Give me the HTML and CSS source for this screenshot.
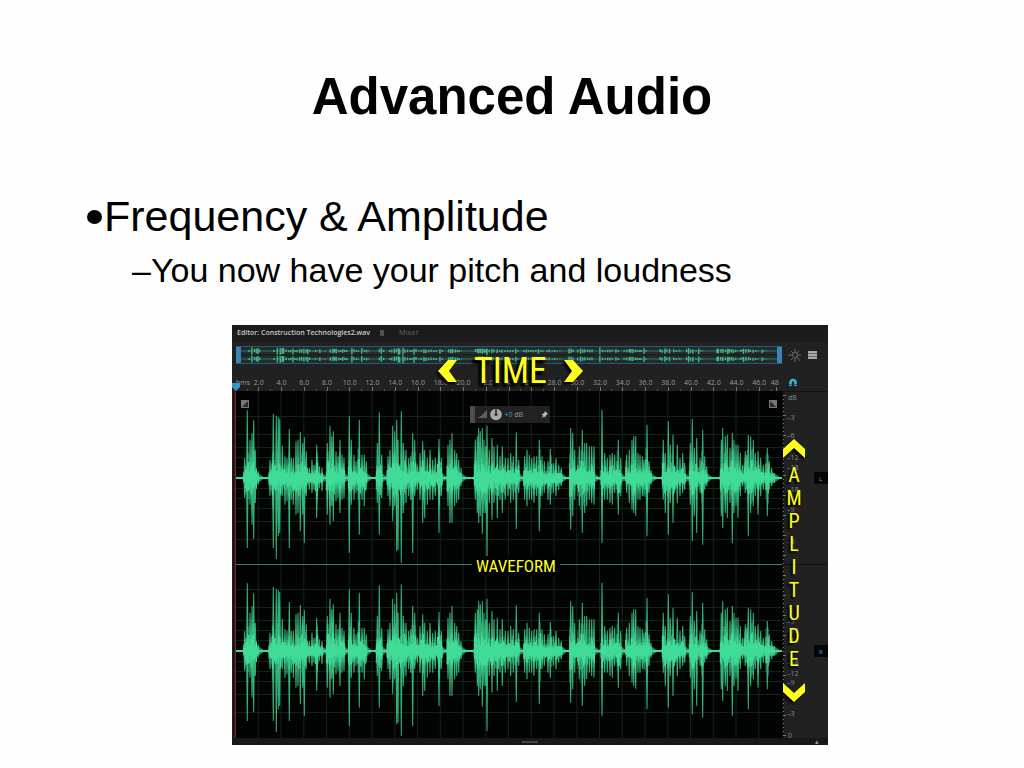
FILE: index.html
```
<!DOCTYPE html>
<html lang="en">
<head>
    <meta charset="UTF-8">
    <meta name="viewport" content="width=device-width, initial-scale=1.0">
    <title>Advanced Audio</title>
    <link rel="stylesheet" href="styles.css">
</head>
<body>
    <main class="slide">
        <h1>Advanced Audio</h1>
        <ul class="points">
            <li>Frequency &amp; Amplitude
                <ul class="sub-points">
                    <li>You now have your pitch and loudness</li>
                </ul>
            </li>
        </ul>

        <figure class="editor">
            <div class="tabs">
                <span class="tab-active">Editor: Construction Technologies2.wav</span>
                <svg class="tab-menu" viewBox="0 0 6 6"><path d="M1 1h4M1 3h4M1 5h4" stroke="#888" stroke-width="1"/></svg>
                <span class="tab">Mixer</span>
            </div>

            <div class="top-row">
                <svg class="overview" viewBox="0 0 548 18" preserveAspectRatio="none">
                    <rect width="548" height="18" fill="#252b2b"/>
                    <path d="M0 .5H548M0 17.5H548" stroke="#245a80"/>
                    <path d="M5 9H543" stroke="#151919"/>
                    <g id="overview-wave" fill="#42b98a"></g>
                    <path d="M0 1h5v16h-5zM543 1h5v16h-5z" fill="#3a84b8"/>
                </svg>
                <svg class="tool-icons" viewBox="0 0 46 18">
                    <g stroke="#6a6a6a" fill="none">
                        <circle cx="13" cy="9" r="2.500"/>
                        <path d="M6 9h4M16 9h3M13 3v3M13 12v4M9 5l2 2M17 5l-2 2M9 14l2-2M15 11l3 4"/>
                    </g>
                    <path d="M26 5h9v8h-9z" fill="#aaa"/>
                    <path d="M26 7.500h9M26 10.500h9" stroke="#666"/>
                </svg>
            </div>

            <div class="ruler-row">
                <div class="ruler" id="ruler"><span class="unit">hms</span></div>
                <svg class="magnet" viewBox="0 0 10 9"><path d="M2.500 8V4.500a2.500 2.500 0 0 1 5 0V8" fill="none" stroke="#35b5d8" stroke-width="2.600"/><path d="M1 6.500h3M6 6.500h3" stroke="#1d2a2e" stroke-width=".6"/></svg>
            </div>

            <div class="stage">
                <svg class="gutter" viewBox="0 0 4 347"><path d="M3.500 0V347" stroke="#8a2020"/></svg>
                <svg class="waves" viewBox="0 0 546 347">
                    <rect width="546" height="347" fill="#020403"/>
                    <g id="grid" stroke="#12241a" stroke-width="1"></g>
                    <path d="M0 173.500H546" stroke="#3f7d61" stroke-width="1"/>
                    <g id="waveforms" fill="#40db96"></g>
                    <g fill="#777">
                        <path d="M5 9h8v8h-8z"/><path d="M6 16l6-6v6z" fill="#2b2b2b"/>
                        <path d="M533 9h8v8h-8z"/><path d="M534 10l6 6h-6z" fill="#2b2b2b"/>
                    </g>
                </svg>
                <svg class="scale" viewBox="0 0 46 347">
                    <rect width="46" height="347" fill="#212121"/>
                    <path d="M0 0V347" stroke="#111" stroke-width="4"/>
                    <path d="M0 .5H46M0 173.500H46" stroke="#111"/>
                    <g id="scale-ticks" stroke="#777" stroke-width="1"></g>
                    <g class="scale-text">
                        <text x="6" y="9">dB</text>
                        <text x="5" y="29">–3</text>
                        <text x="5" y="47">–6</text>
                        <text x="5" y="69">–12</text>
                        <text x="5" y="79">–18</text>
                        <text x="5" y="101">–18</text>
                        <text x="5" y="121">–9</text>
                        <text x="5" y="153">–3</text>
                        <text x="5" y="233">–9</text>
                        <text x="5" y="242">–12</text>
                        <text x="5" y="252">–18</text>
                        <text x="5" y="274">–18</text>
                        <text x="5" y="285">–12</text>
                        <text x="5" y="294">–9</text>
                        <text x="5" y="325">–3</text>
                        <text x="6" y="347">0</text>
                    </g>
                    <path d="M32 81h14v12h-14zM32 254h14v12h-14z" fill="#060606"/>
                    <g class="channel-text">
                        <text x="37" y="90" fill="#999">L</text>
                        <text x="37" y="263" fill="#3f9fe0">R</text>
                    </g>
                </svg>
                <svg class="playhead" viewBox="0 0 8 8"><path d="M0 0h8v4L4 8 0 4z" fill="#3496cf"/></svg>
                <div class="hud">
                    <svg viewBox="0 0 34 17">
                        <path d="M0 0h5v17h-5z" fill="#4b4b4b"/>
                        <path d="M2 3v12" stroke="#6b6b6b" stroke-dasharray="1 1"/>
                        <path d="M7 12h1v-1h2v-1h2V8h2V6h2V4h1v8z" fill="#606060"/>
                        <circle cx="26" cy="8.500" r="5.800" fill="#aaa"/>
                        <path d="M26 3v5" stroke="#222" stroke-width="1.500"/><circle cx="26" cy="8.500" r="1.500" fill="#333"/>
                    </svg>
                    <span><b>+0</b> dB</span>
                    <svg class="pin" viewBox="0 0 12 17"><path d="M0 0V17" stroke="#1a1a1a"/><path d="M7 5l3 3-1 .5-1.500 1.500v1.500L6 10.500 3.500 12.500 5 9.500 3.500 8H5l1.500-1.500z" fill="#bbb"/></svg>
                </div>
                <span class="waveform-note">WAVEFORM</span>
            </div>

            <div class="bottom-bar"><span class="grip"></span><span class="corner">▴</span></div>

            <div class="time-note">
                <svg viewBox="0 0 20 22"><path d="M20 0h-9L1 11l10 11h9L12 11z"/></svg>
                <span>TIME</span>
                <svg viewBox="0 0 20 22"><path d="M0 0h9l10 11L9 22H0l8-11z"/></svg>
            </div>
            <div class="amplitude-note">
                <svg viewBox="0 0 22 20"><path d="M0 20v-9L11 1l11 10v9L11 10z"/></svg>
                <div class="letters"><span>A</span><span>M</span><span>P</span><span>L</span><span>I</span><span>T</span><span>U</span><span>D</span><span>E</span></div>
                <svg viewBox="0 0 22 20"><path d="M0 0v9l11 10L22 9V0L11 10z"/></svg>
            </div>
        </figure>
    </main>
    <script src="wave.js"></script>
</body>
</html>
```
FILE: wave.js
```
// Bursts of the recording: each peak is [position, height above, height below],
// in thirds of a pixel
const bursts = [
    [[26,60,60],[34,203,210],[42,115,80],[48,135,140],[53,173,183],[58,85,75],[66,20,20]],
    [[102,55,55],[112,193,210],[121,187,243],[127,183,175],[131,177,165],[139,97,55],[147,65,80],[153,60,70],[160,147,210],[166,60,65],[172,60,80],[180,110,110],[186,115,105],[193,138,160],[200,105,110],[205,123,195],[211,80,55],[220,30,35],[228,55,45],[234,40,35],[242,100,120],[250,35,30],[258,30,40]],
    [[274,105,110],[282,157,140],[287,125,85],[292,140,130],[300,80,70],[306,65,60],[312,115,105],[318,70,65],[324,60,60]],
    [[340,185,225],[346,115,80],[354,70,65],[360,50,45],[370,175,170],[378,70,65],[385,70,85],[391,50,35]],
    [[424,105,75],[430,197,170],[437,70,60]],
    [[456,65,55],[462,85,85],[470,157,130],[476,140,85],[482,175,220],[486,115,215],[496,200,255],[502,105,105],[510,85,75],[518,60,55],[524,65,65],[530,135,225],[536,115,55],[544,40,35],[552,75,65],[560,110,135],[566,85,120],[574,60,80],[582,85,65],[590,55,65],[598,60,55],[609,117,165],[616,60,55]],
    [[636,100,85],[642,115,135],[648,135,135],[656,85,85],[662,75,75],[668,55,65],[675,30,25]],
    [[718,115,65],[724,125,105],[728,150,135],[733,140,115],[739,150,167],[744,115,105],[749,95,105],[753,157,240],[760,85,75],[768,120,125],[774,95,75],[784,100,120],[792,65,65],[799,95,105],[808,60,65],[816,60,55],[824,75,75],[832,65,65],[841,137,153],[848,55,45]],
    [[866,65,65],[873,85,85],[880,70,65],[887,60,65],[894,65,75],[902,65,55],[910,115,160],[918,65,55],[925,50,45],[936,50,65],[943,87,80],[952,45,45],[960,60,55],[968,40,35],[976,30,25]],
    [[1004,150,155],[1010,135,115],[1016,85,65],[1030,95,85],[1039,145,165],[1046,105,105],[1052,105,85],[1060,95,65],[1067,95,75],[1074,95,80]],
    [[1098,205,195],[1106,75,65],[1114,60,65],[1122,70,75],[1129,75,80],[1136,70,45],[1147,115,110],[1154,60,55]],
    [[1172,70,45],[1180,85,75],[1188,115,95],[1193,125,105],[1199,125,113],[1206,75,65],[1212,70,65],[1219,65,55],[1224,55,55],[1233,160,175],[1239,50,45],[1245,25,20]],
    [[1282,115,65],[1288,75,105],[1297,170,170],[1303,100,75],[1311,130,135],[1324,100,75],[1332,60,55],[1340,75,45],[1346,45,35]],
    [[1363,105,80],[1369,177,190],[1375,90,115],[1382,120,165],[1392,60,45],[1400,145,200],[1406,65,35],[1412,35,25]],
    [[1456,115,115],[1460,150,150],[1468,125,105],[1474,130,120],[1482,90,75],[1489,135,195],[1494,115,105],[1500,100,85],[1506,100,120],[1513,75,55],[1520,40,25]],
    [[1528,80,45],[1532,70,35],[1537,130,175],[1544,125,105],[1552,115,85],[1558,75,55],[1566,80,110],[1574,60,55],[1582,40,35],[1594,90,115],[1600,50,35],[1607,30,25],[1614,15,15]]
];

const n = v => v.toFixed(1);

// Small repeatable wobble so that the body of the wave looks rough
function rough(i) {
    const s = Math.sin(i * 91.7) * 4375.5;
    return s - Math.floor(s);
}

function spike(x, y, up, down, half) {
    return `M${n(x - half)} ${n(y)}L${n(x - 0.5)} ${n(y - up)}h1L${n(x + half)} ${n(y)}L${n(x + 0.5)} ${n(y + down)}h-1Z`;
}

function channel(y) {
    let tall = '';
    let body = `M0 ${y - 1}H546V${y + 1}H0Z`;
    let edges = '';
    bursts.forEach(burst => {
        burst.forEach(([x, up, down]) => {
            tall += spike(x / 3, y, up / 3, down / 3, 1.3);
        });
        const first = burst[0][0] / 3;
        const last = burst[burst.length - 1][0] / 3;
        for (let x = first - 1; x <= last + 1; x += 0.8) {
            // nearest peak sets how thick the body is here
            const near = burst.reduce((a, b) => Math.abs(b[0] / 3 - x) < Math.abs(a[0] / 3 - x) ? b : a);
            const r = rough(x + 3);
            const up = Math.min(near[1] / 3 * 0.5, 19) * (0.3 + 0.7 * r);
            const down = Math.min(near[2] / 3 * 0.5, 19) * (0.3 + 0.7 * rough(x + 40));
            body += `M${n(x - 0.5)} ${n(y - up)}h1V${n(y + down)}h-1Z`;
            if (r > 0.65) {
                edges += `M${n(x - 0.3)} ${n(y - up * 1.6)}h.6V${n(y + down * 1.7)}h-.6Z`;
            }
        }
        edges += `M${n(first - 3)} ${y}L${n(first)} ${y - 5}H${n(last)}L${n(last + 7)} ${y}L${n(last)} ${y + 5}H${n(first)}Z`;
    });
    return `<path d="${tall}" opacity=".8"/><path d="${edges}" opacity=".6"/><path d="${body}"/>`;
}

document.getElementById('waveforms').innerHTML = channel(87) + channel(260);

// Overview strip
let mini = '';
[5, 13].forEach(y => {
    mini += `M5 ${y - 0.3}H543v.6H5Z`;
    bursts.forEach(burst => burst.forEach(([x, up, down]) => {
        mini += `M${n(x / 3 * 0.985 + 4)} ${n(y - up / 60)}h1.4V${n(y + down / 60)}h-1.4Z`;
    }));
});
document.getElementById('overview-wave').innerHTML = `<path d="${mini}"/>`;

// Grid
let lines = '';
for (let i = 1; i < 24; i++) {
    lines += `M${n(i * 22.75 - 0.5)} 0V347`;
}
[87, 260].forEach(y => {
    [11, 21, 31, 44, 62].forEach(d => {
        lines += `M0 ${y - d + 0.5}H546M0 ${y + d - 0.5}H546`;
    });
});
document.getElementById('grid').innerHTML = `<path d="${lines}"/>`;

// Time ruler
const ruler = document.getElementById('ruler');
for (let t = 2; t <= 46; t += 2) {
    const mark = document.createElement('span');
    mark.textContent = t.toFixed(1);
    ruler.appendChild(mark);
}
const end = document.createElement('span');
end.textContent = '48';
ruler.appendChild(end);

let ticks = '';
for (let y = 4; y < 347; y += 4) {
    ticks += `M1 ${y + 0.5}h${y % 20 === 4 ? 3 : 1}`;
}
document.getElementById('scale-ticks').innerHTML = `<path d="${ticks}"/>`;
```
FILE: styles.css
```
:root {
    --panel: #212121;
    --panel-dark: #1b1b1b;
    --label: #999;
    --note: #ffff1a;
    --note-font: "Liberation Sans Narrow", "Roboto Condensed", "Open Sans Condensed", "DejaVu Sans Condensed", sans-serif;
}

* {
    box-sizing: border-box;
}
body {
    margin: 0;
    background-color: #fefefe;
    color: #000;
    font-family: "Liberation Sans", Arial, sans-serif;
}
.slide {
    padding: 67px 36px 23px;
}
h1 {
    margin: 0 0 62px;
    font-size: 51px;
    line-height: 60px;
    text-align: center;
}
ul {
    margin: 0;
    padding: 0;
    list-style: none;
}
.points {
    padding-left: 51px;
    font-size: 43px;
    line-height: 54px;
}
.points > li::before {
    content: "";
    display: inline-block;
    width: 15px;
    height: 14px;
    margin-right: 2px;
    border-radius: 50%;
    background-color: #000;
    vertical-align: 7px;
}
.sub-points {
    padding-left: 45px;
    font-size: 34px;
}
.sub-points li::before {
    content: "–";
}

.editor {
    position: relative;
    width: 100%;
    max-width: 596px;
    margin: 28px auto 0;
    left: 18px;
    background-color: var(--panel);
    color: var(--label);
    font-family: "Open Sans", "Noto Sans", sans-serif;
    font-size: 7px;
    overflow: hidden;
}
.editor svg {
    display: block;
}
.tabs {
    display: flex;
    align-items: center;
    gap: 9px;
    height: 18px;
    padding: 0 5px 3px;
    background-color: var(--panel-dark);
}
.tab-active {
    color: #ccc;
    font-weight: 600;
}
.tab-menu {
    width: 6px;
    height: 6px;
}
.tab {
    margin-left: 5px;
    color: #555;
    font-weight: 600;
}
.top-row {
    display: grid;
    grid-template-columns: 546fr 46fr;
    padding: 3px 0 0 4px;
    align-items: center;
}
.overview {
    width: 100%;
    height: 18px;
}
.tool-icons {
    width: 100%;
}
.ruler-row {
    display: grid;
    grid-template-columns: 546fr 46fr;
    height: 27px;
    padding-left: 4px;
    align-items: end;
}
.ruler {
    display: grid;
    grid-template-columns: 1fr repeat(23, 2fr) 1fr;
    height: 13px;
    overflow: hidden;
    line-height: 10px;
}
.ruler span {
    min-width: 0;
    text-align: center;
    background: linear-gradient(#777, #777) center bottom / 1px 4px no-repeat,
        linear-gradient(#555, #555) left bottom / 1px 2px no-repeat;
}
.ruler .unit {
    background: none;
}
.ruler span:last-child {
    text-align: left;
}
.magnet {
    width: 10px;
    margin: 0 0 4px 6px;
}
.stage {
    position: relative;
    display: grid;
    grid-template-columns: 4fr 546fr 46fr;
}
.stage > svg {
    width: 100%;
}
.gutter {
    background-color: var(--panel-dark);
}
.stage > .playhead {
    position: absolute;
    top: -8px;
    left: 0;
    width: 8px;
}
.scale-text {
    fill: #888;
    font-size: 7px;
}
.channel-text {
    font-size: 6px;
}

/* Volume control that floats over the wave */
.hud {
    position: absolute;
    top: 15px;
    left: 40%;
    display: flex;
    align-items: center;
    width: 80px;
    height: 17px;
    background-color: #222;
}
.hud svg {
    width: 34px;
    height: 17px;
}
.hud .pin {
    width: 12px;
    margin-left: auto;
}
.hud b {
    color: #3aa0c0;
    font-weight: normal;
}
.bottom-bar {
    display: flex;
    align-items: center;
    justify-content: center;
    height: 7px;
    background-color: #181818;
    position: relative;
}
.grip {
    width: 16px;
    height: 2px;
    background-color: #444;
}
.corner {
    position: absolute;
    right: 9px;
    line-height: 7px;
}

/* Yellow notes on top of the editor */
.waveform-note,
.time-note,
.amplitude-note {
    position: absolute;
    color: var(--note);
    fill: var(--note);
    font-family: var(--note-font);
    text-shadow: -2px 2px 2px #000;
}
.time-note svg,
.amplitude-note svg {
    filter: drop-shadow(-2px 2px 1px #000);
}
.waveform-note {
    top: 165px;
    left: 240px;
    padding: 0 4px;
    background-color: #020403;
    font-size: 17px;
    line-height: 20px;
}
.time-note {
    top: 26px;
    left: 205px;
    display: flex;
    align-items: center;
    justify-content: space-between;
    width: 147px;
    font-size: 36px;
    line-height: 40px;
    text-shadow: -3px 3px 2px #000, -1px 4px 3px #000;
}
.time-note svg {
    width: 20px;
}
.amplitude-note {
    top: 113px;
    right: 23px;
    display: flex;
    flex-direction: column;
    align-items: center;
    width: 22px;
    font-size: 20px;
    line-height: 23px;
}
.amplitude-note svg {
    width: 22px;
}
.letters {
    display: flex;
    flex-direction: column;
    align-items: center;
    padding: 6px 0 12px;
}
```
